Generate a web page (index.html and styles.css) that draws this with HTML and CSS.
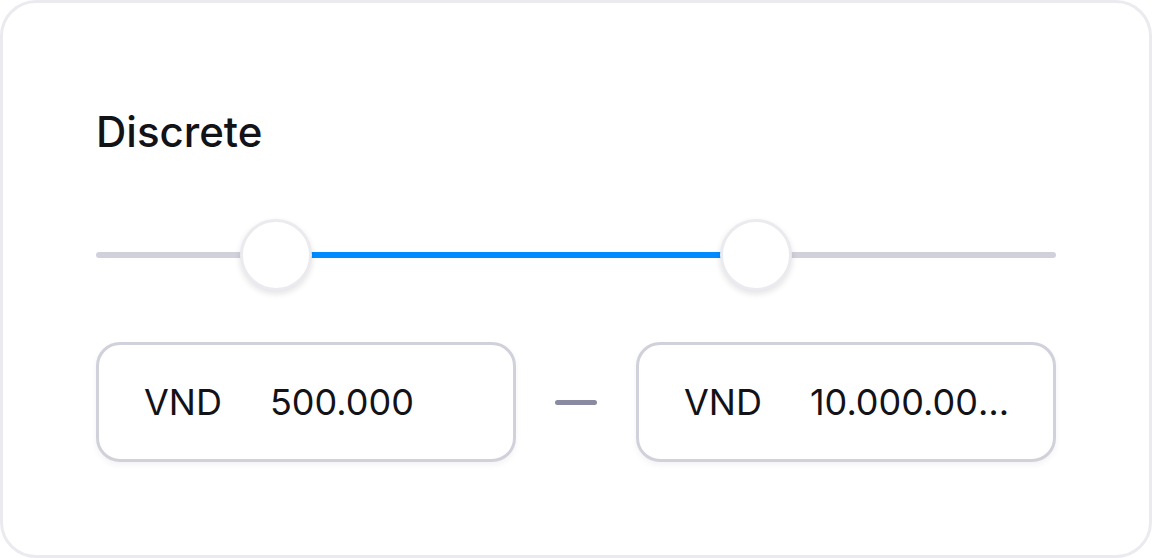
FILE: index.html
```html
<!DOCTYPE html>
<html lang="en">
<head>
<meta charset="utf-8">
<meta name="viewport" content="width=device-width, initial-scale=1">
<title>Discrete range</title>
<link rel="stylesheet" href="styles.css">
</head>
<body>
<section class="card">
  <h2 class="title">Discrete</h2>
  <div class="slider">
    <div class="rail"></div>
    <input class="range" type="range" min="0" max="37" step="1" value="6" aria-label="Minimum price">
    <input class="range" type="range" min="0" max="37" step="1" value="26" aria-label="Maximum price">
  </div>
  <div class="fields">
    <div class="field">
      <label class="prefix" for="min-value">VND</label>
      <input class="value" id="min-value" type="text" value="500.000">
    </div>
    <div class="separator"></div>
    <div class="field">
      <label class="prefix" for="max-value">VND</label>
      <input class="value" id="max-value" type="text" value="10.000.000.000">
    </div>
  </div>
</section>
</body>
</html>
```

FILE: styles.css
```css
* {
  box-sizing: border-box;
}

body {
  margin: 0;
  background: #fff;
  color: #121217;
  font-family: Inter, "Liberation Sans", sans-serif;
}

.card {
  display: flex;
  flex-direction: column;
  gap: 51px;
  padding: 93px;
  border: 3px solid #ebebef;
  border-radius: 36px;
  background: #fff;
}

.title {
  margin: 0;
  font-size: 42px;
  font-weight: 500;
  line-height: 72px;
}

.slider {
  display: grid;
  align-items: center;
}

.rail,
.range {
  grid-area: 1 / 1;
}

.rail {
  height: 6px;
  border-radius: 3px;
  background: linear-gradient(to right, #d1d1db 18.75%, #008cff 18.75%, #008cff 68.75%, #d1d1db 68.75%);
}

.range {
  width: 100%;
  height: 72px;
  margin: 0;
  background: transparent;
  appearance: none;
  pointer-events: none;
}

.range::-webkit-slider-thumb {
  width: 72px;
  height: 72px;
  border: 3px solid #ebebef;
  border-radius: 50%;
  background: #fff;
  box-shadow: 0 3px 6px rgba(18, 18, 23, 0.12);
  appearance: none;
  pointer-events: auto;
}

.fields {
  display: grid;
  grid-template-columns: 1fr 120px 1fr;
  align-items: center;
}

.field {
  display: flex;
  align-items: center;
  gap: 48px;
  min-width: 0;
  padding: 27px 36px 27px 45px;
  border: 3px solid #d1d1db;
  border-radius: 24px;
  background: #fff;
  box-shadow: 0 3px 6px rgba(18, 18, 23, 0.05);
  font-size: 36px;
  line-height: 60px;
}

.value {
  flex: 1;
  width: 0;
  min-width: 0;
  height: 60px;
  padding: 0;
  border: 0;
  outline: 0;
  background: transparent;
  color: inherit;
  font: inherit;
  text-overflow: ellipsis;
}

.separator {
  width: 42px;
  height: 5px;
  justify-self: center;
  border-radius: 3px;
  background: #8a8aa3;
}
```
